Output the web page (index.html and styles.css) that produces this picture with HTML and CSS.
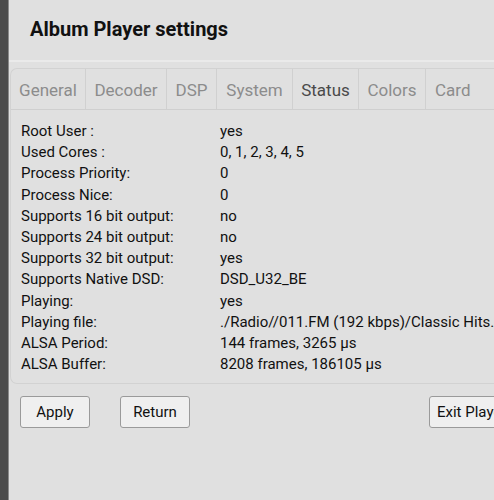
FILE: index.html
```html
<!DOCTYPE html>
<html>
<head>
<meta charset="utf-8">
<link rel="stylesheet" href="styles.css">
</head>
<body>
<div class="page">
  <div class="strip"></div>
  <div class="main">
    <h1 class="title">Album Player settings</h1>
    <div class="panel">
      <div class="tabs">
        <div class="tab t1">General</div>
        <div class="tab t2">Decoder</div>
        <div class="tab t3">DSP</div>
        <div class="tab t4">System</div>
        <div class="tab t5 active">Status</div>
        <div class="tab t6">Colors</div>
        <div class="tab t7">Card</div>
      </div>
      <div class="rows">
        <div class="row"><span class="lbl">Root User :</span><span class="val">yes</span></div>
        <div class="row"><span class="lbl">Used Cores :</span><span class="val">0, 1, 2, 3, 4, 5</span></div>
        <div class="row"><span class="lbl">Process Priority:</span><span class="val">0</span></div>
        <div class="row"><span class="lbl">Process Nice:</span><span class="val">0</span></div>
        <div class="row"><span class="lbl">Supports 16 bit output:</span><span class="val">no</span></div>
        <div class="row"><span class="lbl">Supports 24 bit output:</span><span class="val">no</span></div>
        <div class="row"><span class="lbl">Supports 32 bit output:</span><span class="val">yes</span></div>
        <div class="row"><span class="lbl">Supports Native DSD:</span><span class="val">DSD_U32_BE</span></div>
        <div class="row"><span class="lbl">Playing:</span><span class="val">yes</span></div>
        <div class="row"><span class="lbl">Playing file:</span><span class="val">./Radio//011.FM (192 kbps)/Classic Hits.m3u</span></div>
        <div class="row"><span class="lbl">ALSA Period:</span><span class="val">144 frames, 3265 µs</span></div>
        <div class="row"><span class="lbl">ALSA Buffer:</span><span class="val">8208 frames, 186105 µs</span></div>
      </div>
    </div>
    <div class="buttons">
      <button class="btn apply">Apply</button>
      <button class="btn ret">Return</button>
      <button class="btn exit">Exit Player</button>
    </div>
  </div>
</div>
</body>
</html>
```
FILE: styles.css
```css
html, body {
  margin: 0;
  padding: 0;
  background: #e0e0e0;
  overflow: hidden;
  width: 494px;
  height: 500px;
}
.page {
  display: flex;
  height: 500px;
  font-family: Roboto, "Noto Sans", sans-serif;
}
.strip {
  width: 8px;
  flex: none;
  background: #4b4b4b;
  border-right: 1px solid #8a8a8a;
}
.main {
  flex: 1;
  min-width: 0;
  overflow: hidden;
}
.title {
  margin: 0;
  height: 62px;
  box-sizing: border-box;
  padding: 17px 0 0 21px;
  font-size: 20px;
  font-weight: bold;
  color: #111;
  border-bottom: 2px solid #eaeaea;
}
.panel {
  margin: 6px -40px 0 1px;
  border: 1px solid #d2d2d2;
  border-right: none;
  border-radius: 7px 0 0 7px;
  height: 316px;
  box-sizing: border-box;
}
.tabs {
  display: flex;
  height: 40px;
  border-bottom: 1px solid #cfcfcf;
}
.tab {
  box-sizing: border-box;
  display: flex;
  align-items: center;
  justify-content: center;
  padding-top: 1px;
  font-size: 17px;
  color: #8c8c8c;
  border-right: 1px solid #d0d0d0;
}
.tab.active { color: #4a4a4a; }
.t1 { width: 75px; }
.t2 { width: 81px; }
.t3 { width: 50px; }
.t4 { width: 76px; }
.t5 { width: 66px; }
.t6 { width: 67px; }
.t7 { width: 80px; justify-content: flex-start; padding-left: 9px; border-right: none; }
.rows {
  padding: 11px 0 0 10px;
}
.row {
  display: flex;
  height: 21.2px;
  line-height: 21.2px;
  font-size: 15px;
  color: #111;
  white-space: nowrap;
}
.lbl { width: 199px; flex: none; }
.val { flex: none; }
.buttons {
  display: flex;
  margin: 12px 0 0 11px;
  white-space: nowrap;
}
.btn {
  height: 32px;
  box-sizing: border-box;
  background: #efefef;
  border: 1px solid #9a9a9a;
  border-radius: 3px;
  font-family: Roboto, "Noto Sans", sans-serif;
  font-size: 15px;
  color: #111;
  padding: 0;
  flex: none;
}
.apply { width: 70px; }
.ret { width: 70px; margin-left: 30px; }
.exit { width: 100px; margin-left: 239px; padding-left: 7px; text-align: left; }
```
